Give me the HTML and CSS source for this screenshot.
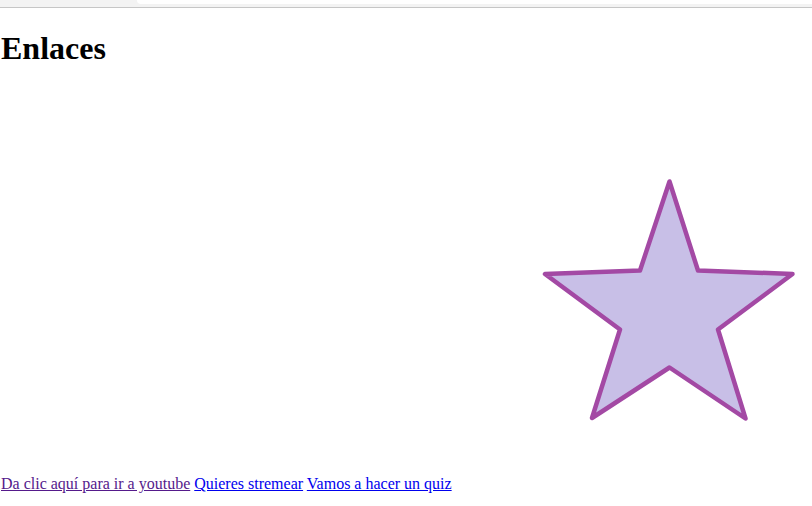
FILE: index.html
```html
<!DOCTYPE html>
<html lang="es">
<head>
<meta charset="utf-8">
<title>Enlaces</title>
<link rel="stylesheet" href="styles.css">
</head>
<body>
<div class="chrome"><div class="tab"></div></div>
<h1 class="title">Enlaces</h1>
<div class="stage">
  <svg class="star" width="812" height="387" viewBox="0 88 812 387" xmlns="http://www.w3.org/2000/svg">
    <polygon points="669.5,181.5 698,270.5 792.5,274 718,329.5 745.5,418.5 669.5,367.5 592,418 620,329.5 545,274 640,270.5" fill="#c8bfe7" stroke="#a349a4" stroke-width="4.5" stroke-linejoin="round"/>
  </svg>
</div>
<p class="links"><a class="visited" href="#">Da clic aquí para ir a youtube</a> <a href="#">Quieres stremear</a> <a href="#">Vamos a hacer un quiz</a></p>
</body>
</html>
```
FILE: styles.css
```css
html, body {
  margin: 0;
  padding: 0;
  background: #ffffff;
}
body {
  font-family: "Liberation Serif", "Times New Roman", serif;
  font-size: 16px;
  color: #000;
}
.chrome {
  height: 7px;
  background: #f3f3f3;
  border-bottom: 1px solid #c6c6c6;
  display: flex;
  justify-content: flex-end;
}
.tab {
  width: 675px;
  height: 4px;
  background: #ffffff;
  border-bottom-left-radius: 4px;
}
.title {
  font-size: 32px;
  font-weight: bold;
  margin: 22px 0 21.4px 1px;
  line-height: normal;
}
.stage {
  height: 387px;
}
.star {
  display: block;
}
.links {
  margin: 0;
  padding-left: 1px;
  line-height: normal;
}
.links a {
  color: #0000ee;
}
.links a.visited {
  color: #551a8b;
}
```
